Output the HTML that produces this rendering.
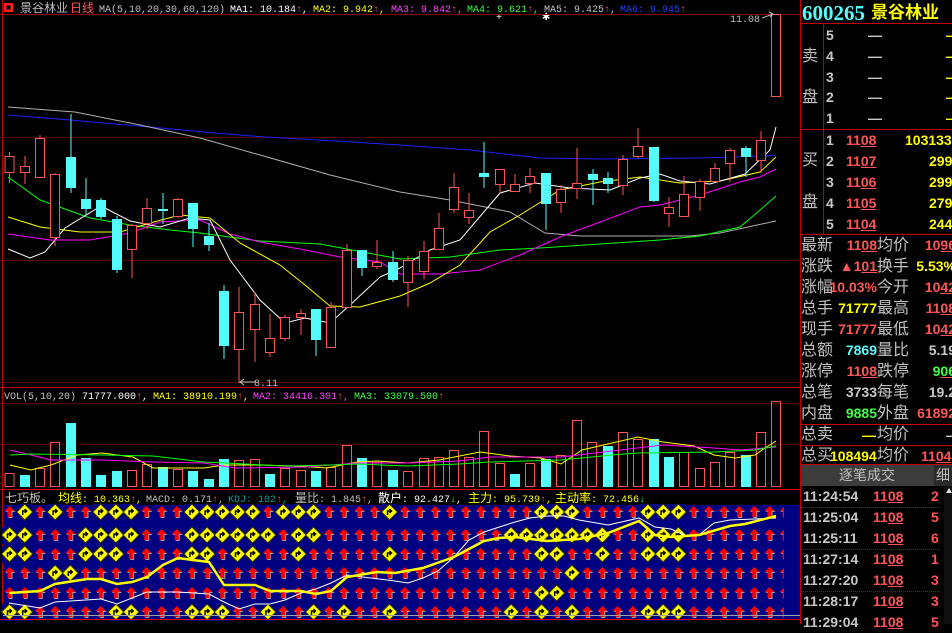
<!DOCTYPE html>
<html><head><meta charset="utf-8"><style>
*{margin:0;padding:0;box-sizing:border-box}
body{width:952px;height:624px;background:#000;overflow:hidden;position:relative;font-family:"Liberation Sans","Noto Sans CJK SC",sans-serif}
.a{position:absolute;white-space:nowrap}
.l{font-size:16px;color:#c0c0c0;line-height:20px}
.n{font-size:14px;font-weight:bold;line-height:20px}
.r{color:#ff5555}.y{color:#ffff00}.c{color:#54fcfc}.g{color:#40ff40}.w{color:#c8c8c8}
u{text-decoration:underline;text-decoration-color:#ff5555}
.hl{position:absolute;left:800px;width:152px;height:1px;background:#c00000}
.dl{position:absolute;left:800px;width:140px;height:0;border-top:1px dotted #c00000}
</style></head><body>
<svg width="952" height="624" style="position:absolute;left:0;top:0" font-family="Liberation Mono,'Noto Sans CJK SC',monospace">
<defs>
<pattern id="ar" patternUnits="userSpaceOnUse" x="1.9" y="-10" width="15.2" height="20">
<polygon transform="translate(8.6,11)" points="0,-6 5,-1 2,-1 2,5 -2,5 -2,-1 -5,-1" fill="#a0a0a0"/>
<polygon transform="translate(7.6,10)" points="0,-6 5,-1 2,-1 2,5 -2,5 -2,-1 -5,-1" fill="#ff0000"/>
</pattern>
<g id="d"><rect x="-7.5" y="-8" width="15" height="17" fill="#000080"/><polygon points="0,-8 8,0 0,8 -8,0" fill="#ffff00" stroke="#303000" stroke-width="1"/><path d="M-2,3V-1H2M0,-3L2,-1L0,1" stroke="#000" fill="none" stroke-width="1.5"/></g>
</defs>
<!-- header -->
<rect x="4" y="3" width="9" height="9" fill="#ff2020"/><rect x="6.5" y="5.5" width="4" height="4" fill="#000"/>
<text x="20" y="12" font-size="12" fill="#c0c0c0">景谷林业</text>
<text x="70" y="12" font-size="12" fill="#ff5555">日线</text>
<g font-size="10" y="12">
<text x="99" y="12" fill="#c0c0c0">MA(5,10,20,30,60,120)</text>
<text x="230" y="12" fill="#fff">MA1: 10.184<tspan fill="#ff5555">↑</tspan>,</text>
<text x="313" y="12" fill="#ffff00">MA2: 9.942<tspan fill="#ff5555">↑</tspan>,</text>
<text x="391" y="12" fill="#ff40ff">MA3: 9.842<tspan fill="#ff5555">↑</tspan>,</text>
<text x="467" y="12" fill="#40ff40">MA4: 9.621<tspan fill="#ff5555">↑</tspan>,</text>
<text x="544" y="12" fill="#c0c0c0">MA5: 9.425<tspan fill="#ff5555">↑</tspan>,</text>
<text x="620" y="12" fill="#2040ff">MA6: 9.945<tspan fill="#ff5555">↑</tspan></text>
</g>
<text x="496" y="20" font-size="10" fill="#fff">+</text><text x="542" y="20" font-size="10" fill="#fff">✱</text>
<!-- frame -->
<line x1="0" y1="14.5" x2="800" y2="14.5" stroke="#800000"/>
<line x1="2.5" y1="0" x2="2.5" y2="620" stroke="#c00000"/>
<line x1="800.5" y1="0" x2="800.5" y2="624" stroke="#c00000"/>
<line x1="0" y1="137.5" x2="800" y2="137.5" stroke="#500000"/>
<line x1="0" y1="260.5" x2="800" y2="260.5" stroke="#500000"/>
<line x1="0" y1="382.5" x2="800" y2="382.5" stroke="#500000"/>
<line x1="0" y1="387.5" x2="800" y2="387.5" stroke="#d00000"/>
<line x1="0" y1="444.5" x2="800" y2="444.5" stroke="#500000"/>
<line x1="0" y1="403.5" x2="800" y2="403.5" stroke="#500000"/>
<line x1="0" y1="489.5" x2="800" y2="489.5" stroke="#d00000"/>
<!-- MAs -->
<g fill="none" stroke-width="1">
<polyline stroke="#2020ff" points="8,115 70,120 150,127 215,133 265,137 335,141 400,145 470,150 540,158 600,159 700,158 765,156 776,155"/>
<polyline stroke="#b0b0b0" points="8,107 75,112 140,125 200,138 260,155 330,175 400,192 450,200 510,212 545,233 580,236 630,236 690,236 720,233 776,221"/>
<polyline stroke="#00ff00" points="8,177 40,200 90,218 130,225 170,230 200,233 260,241 320,244 400,259 450,257 500,250 540,248 600,244 660,240 700,236 740,227 760,210 776,196"/>
<polyline stroke="#ff00ff" points="8,234 50,240 90,240 130,233 160,222 200,220 230,234 260,242 300,249 340,257 380,262 400,274 440,274 480,270 520,255 560,237 600,222 640,207 660,205 700,195 740,182 760,177 776,169"/>
<polyline stroke="#ffff00" points="8,217 40,227 80,232 120,232 150,223 180,215 210,218 240,243 280,265 305,285 330,306 360,307 400,296 430,283 460,265 490,232 520,215 560,190 600,182 640,177 680,183 720,181 760,172 776,157"/>
<polyline stroke="#ffffff" points="8,249 30,258 45,252 65,228 101,206 130,221 160,227 190,218 210,220 230,260 260,300 285,323 305,318 330,323 350,305 380,277 400,268 430,250 460,240 500,193 535,183 570,188 610,190 640,178 660,174 680,181 710,184 745,174 770,150 776,127"/>
</g>
<!-- candles -->
<g id="candles" stroke-width="1">
<g stroke="#ff5555">
<line x1="9.5" y1="152" x2="9.5" y2="183"/><line x1="25" y1="156" x2="25" y2="184"/><line x1="40" y1="135" x2="40" y2="178"/><line x1="55" y1="173" x2="55" y2="246"/><line x1="132" y1="224" x2="132" y2="278"/><line x1="147" y1="198" x2="147" y2="229"/><line x1="178" y1="198" x2="178" y2="218"/><line x1="239" y1="287" x2="239" y2="383"/><line x1="255" y1="292" x2="255" y2="362"/><line x1="270" y1="314" x2="270" y2="357"/><line x1="285" y1="315" x2="285" y2="341"/><line x1="301" y1="309" x2="301" y2="335"/><line x1="331" y1="302" x2="331" y2="348"/><line x1="347" y1="244" x2="347" y2="308"/><line x1="377" y1="240" x2="377" y2="269"/><line x1="408" y1="256" x2="408" y2="307"/><line x1="424" y1="241" x2="424" y2="279"/><line x1="439" y1="213" x2="439" y2="250"/><line x1="454" y1="173" x2="454" y2="213"/><line x1="469" y1="193" x2="469" y2="224"/><line x1="500" y1="169" x2="500" y2="193"/><line x1="515" y1="174" x2="515" y2="192"/><line x1="530" y1="168" x2="530" y2="193"/><line x1="561" y1="185" x2="561" y2="213"/><line x1="577" y1="148" x2="577" y2="199"/><line x1="623" y1="155" x2="623" y2="195"/><line x1="638" y1="128" x2="638" y2="158"/><line x1="669" y1="197" x2="669" y2="227"/><line x1="684" y1="176" x2="684" y2="217"/><line x1="700" y1="179" x2="700" y2="211"/><line x1="715" y1="163" x2="715" y2="182"/><line x1="730" y1="148" x2="730" y2="182"/><line x1="761" y1="131" x2="761" y2="173"/>
</g>
<g fill="#000" stroke="#ff5555">
<rect x="5" y="156.5" width="9" height="16"/><rect x="20.5" y="166.5" width="9" height="6"/><rect x="35.5" y="138.5" width="9" height="39"/><rect x="50.5" y="174.5" width="9" height="63"/><rect x="127.5" y="225.5" width="9" height="24"/><rect x="142.5" y="208.5" width="9" height="15"/><rect x="173.5" y="199.5" width="9" height="17"/><rect x="234.5" y="312.5" width="9" height="37"/><rect x="250.5" y="304.5" width="9" height="25"/><rect x="265.5" y="338.5" width="9" height="14"/><rect x="280.5" y="317.5" width="9" height="21"/><rect x="296.5" y="313.5" width="9" height="4"/><rect x="326.5" y="307.5" width="9" height="40"/><rect x="342.5" y="250.5" width="9" height="57"/><rect x="372.5" y="262.5" width="9" height="4"/><rect x="403.5" y="260.5" width="9" height="22"/><rect x="419.5" y="251.5" width="9" height="20"/><rect x="434.5" y="228.5" width="9" height="21"/><rect x="449.5" y="187.5" width="9" height="22"/><rect x="464.5" y="210.5" width="9" height="7"/><rect x="495.5" y="169.5" width="9" height="15"/><rect x="510.5" y="184.5" width="9" height="7"/><rect x="525.5" y="176.5" width="9" height="7"/><rect x="556.5" y="189.5" width="9" height="13"/><rect x="572.5" y="183.5" width="9" height="5"/><rect x="618.5" y="159.5" width="9" height="26"/><rect x="633.5" y="146.5" width="9" height="10"/><rect x="664.5" y="207.5" width="9" height="6"/><rect x="679.5" y="194.5" width="9" height="22"/><rect x="695.5" y="181.5" width="9" height="16"/><rect x="710.5" y="168.5" width="9" height="13"/><rect x="725.5" y="150.5" width="9" height="13"/><rect x="756.5" y="140.5" width="9" height="20"/><rect x="771.5" y="14.5" width="9" height="82"/>
</g>
<g stroke="#54fcfc">
<line x1="71" y1="114" x2="71" y2="193"/><line x1="86" y1="178" x2="86" y2="215"/><line x1="101" y1="198" x2="101" y2="219"/><line x1="117" y1="216" x2="117" y2="273"/><line x1="163" y1="193" x2="163" y2="224"/><line x1="193" y1="203" x2="193" y2="247"/><line x1="209" y1="223" x2="209" y2="251"/><line x1="224" y1="285" x2="224" y2="359"/><line x1="316" y1="309" x2="316" y2="356"/><line x1="362" y1="250" x2="362" y2="276"/><line x1="393" y1="251" x2="393" y2="282"/><line x1="484" y1="142" x2="484" y2="188"/><line x1="546" y1="173" x2="546" y2="230"/><line x1="593" y1="169" x2="593" y2="205"/><line x1="608" y1="172" x2="608" y2="193"/><line x1="654" y1="147" x2="654" y2="202"/><line x1="746" y1="146" x2="746" y2="177"/>
</g>
<g fill="#54fcfc">
<rect x="66" y="157" width="10" height="31"/><rect x="81" y="199" width="10" height="10"/><rect x="96" y="200" width="10" height="17"/><rect x="112" y="219" width="10" height="51"/><rect x="158" y="209" width="10" height="2"/><rect x="188" y="203" width="10" height="26"/><rect x="204" y="236" width="10" height="9"/><rect x="219" y="291" width="10" height="55"/><rect x="311" y="309" width="10" height="31"/><rect x="357" y="250" width="10" height="18"/><rect x="388" y="262" width="10" height="18"/><rect x="479" y="173" width="10" height="4"/><rect x="541" y="173" width="10" height="31"/><rect x="588" y="174" width="10" height="6"/><rect x="603" y="178" width="10" height="6"/><rect x="649" y="147" width="10" height="54"/><rect x="741" y="148" width="10" height="9"/>
</g>
</g>
<text x="730" y="22" font-size="10" fill="#c0c0c0">11.08</text>
<path d="M762,18 L773,14 M769,12 L773,14 L770,17" stroke="#c0c0c0" fill="none"/>
<path d="M240,382 H256 M244,379 L240,382 L244,385" stroke="#c0c0c0" fill="none"/>
<text x="254" y="386" font-size="10" fill="#c0c0c0">8.11</text>
<!-- vol title -->
<g font-size="10">
<text x="4" y="399" fill="#c0c0c0">VOL(5,10,20)</text>
<text x="82" y="399" fill="#fff">71777.000<tspan fill="#ff5555">↑</tspan>,</text>
<text x="153" y="399" fill="#ffff00">MA1: 38910.199<tspan fill="#ff5555">↑</tspan>,</text>
<text x="253" y="399" fill="#ff40ff">MA2: 34416.301<tspan fill="#ff5555">↑</tspan>,</text>
<text x="354" y="399" fill="#40ff40">MA3: 33079.500<tspan fill="#ff5555">↑</tspan></text>
</g>
<!-- volume bars -->
<g fill="#54fcfc">
<rect x="20" y="475" width="10" height="12"/><rect x="66" y="423" width="10" height="64"/><rect x="81" y="458" width="10" height="29"/><rect x="96" y="475" width="10" height="12"/><rect x="112" y="471" width="10" height="16"/><rect x="158" y="467" width="10" height="20"/><rect x="188" y="471" width="10" height="16"/><rect x="204" y="479" width="10" height="8"/><rect x="219" y="459" width="10" height="28"/><rect x="265" y="474" width="10" height="13"/><rect x="311" y="471" width="10" height="16"/><rect x="357" y="458" width="10" height="29"/><rect x="388" y="470" width="10" height="17"/><rect x="510" y="474" width="10" height="13"/><rect x="541" y="459" width="10" height="28"/><rect x="603" y="446" width="10" height="41"/><rect x="649" y="439" width="10" height="48"/><rect x="664" y="457" width="10" height="30"/><rect x="741" y="455" width="10" height="32"/>
</g>
<g fill="none" stroke="#ff5555">
<rect x="5" y="473.5" width="9" height="13"/><rect x="35.5" y="468.5" width="9" height="18"/><rect x="50.5" y="442.5" width="9" height="44"/><rect x="127.5" y="470.5" width="9" height="16"/><rect x="142.5" y="464.5" width="9" height="22"/><rect x="173.5" y="469.5" width="9" height="17"/><rect x="234.5" y="460.5" width="9" height="26"/><rect x="250.5" y="459.5" width="9" height="27"/><rect x="280.5" y="468.5" width="9" height="18"/><rect x="296.5" y="470.5" width="9" height="16"/><rect x="326.5" y="467.5" width="9" height="19"/><rect x="342.5" y="445.5" width="9" height="41"/><rect x="372.5" y="462.5" width="9" height="24"/><rect x="403.5" y="471.5" width="9" height="15"/><rect x="419.5" y="458.5" width="9" height="28"/><rect x="434.5" y="457.5" width="9" height="29"/><rect x="449.5" y="450.5" width="9" height="36"/><rect x="464.5" y="457.5" width="9" height="29"/><rect x="479.5" y="431.5" width="9" height="55"/><rect x="495.5" y="463.5" width="9" height="23"/><rect x="525.5" y="463.5" width="9" height="23"/><rect x="556.5" y="455.5" width="9" height="31"/><rect x="572.5" y="420.5" width="9" height="66"/><rect x="587.5" y="442.5" width="9" height="44"/><rect x="618.5" y="432.5" width="9" height="54"/><rect x="633.5" y="439.5" width="9" height="47"/><rect x="679.5" y="452.5" width="9" height="34"/><rect x="695.5" y="468.5" width="9" height="18"/><rect x="710.5" y="462.5" width="9" height="24"/><rect x="725.5" y="452.5" width="9" height="34"/><rect x="756.5" y="432.5" width="9" height="54"/><rect x="771.5" y="401.5" width="9" height="85"/>
</g>
<g fill="none">
<polyline stroke="#ffff00" points="10,465 31,470 51,465 77,455 102,453 133,457 153,468 204,468 224,465 255,465 296,466 327,468 357,462 378,461 408,463 439,460 480,452 510,456 541,458 561,464 582,450 612,443 638,437 663,442 694,446 714,455 735,458 755,455 765,448 776,441"/>
<polyline stroke="#ff00ff" points="10,450 31,455 51,460 102,460 153,462 204,463 235,468 306,467 357,463 408,463 459,461 490,457 561,457 612,451 663,445 714,448 740,450 776,447"/>
<polyline stroke="#00ff00" points="10,455 31,454 102,455 153,456 204,462 286,466 332,465 357,464 408,466 459,464 490,462 561,460 612,455 638,453 714,452 755,450 776,446"/>
</g>
<!-- bottom panel -->
<rect x="3" y="491" width="797" height="14" fill="#000"/>
<g font-size="10">
<text x="5" y="502" fill="#c0c0c0" font-size="12">七巧板。</text>
<text x="58" y="502" fill="#ffff00"><tspan font-size="12">均线</tspan>: 10.363<tspan fill="#ff5555">↑</tspan>,</text>
<text x="146" y="502" fill="#c0c0c0">MACD: 0.171<tspan fill="#ff5555">↑</tspan>,</text>
<text x="228" y="502" fill="#00a0a0">KDJ: 102<tspan fill="#ff5555">↑</tspan>,</text>
<text x="295" y="502" fill="#c0c0c0"><tspan font-size="12">量比</tspan>: 1.845<tspan fill="#ff5555">↑</tspan>,</text>
<text x="378" y="502" fill="#fff"><tspan font-size="12">散户</tspan>: 92.427<tspan fill="#40ff40">↓</tspan>,</text>
<text x="468" y="502" fill="#ffff00"><tspan font-size="12">主力</tspan>: 95.739<tspan fill="#ff5555">↑</tspan>,</text>
<text x="555" y="502" fill="#ffff00"><tspan font-size="12">主动率</tspan>: 72.456<tspan fill="#40ff40">↓</tspan></text>
</g>
<rect x="3" y="505" width="797" height="114" fill="#000080"/>
<g transform="translate(0,512)"><rect x="2" y="-10" width="782" height="20" fill="url(#ar)"/></g>
<g transform="translate(0,535)"><rect x="2" y="-10" width="782" height="20" fill="url(#ar)"/></g>
<g transform="translate(0,554)"><rect x="2" y="-10" width="782" height="20" fill="url(#ar)"/></g>
<g transform="translate(0,573)"><rect x="2" y="-10" width="782" height="20" fill="url(#ar)"/></g>
<g transform="translate(0,593)"><rect x="2" y="-10" width="782" height="20" fill="url(#ar)"/></g>
<g transform="translate(0,612)"><rect x="2" y="-10" width="782" height="18" fill="url(#ar)"/></g>
<!-- diamonds row1 y512 cols 1,3,6,7,8,12,13,14,15,16,18,19,20,25,35,36,37,42,43,44 -->
<use href="#d" x="24.7" y="512"/><use href="#d" x="55.1" y="512"/><use href="#d" x="100.7" y="512"/><use href="#d" x="115.9" y="512"/><use href="#d" x="131.1" y="512"/><use href="#d" x="191.9" y="512"/><use href="#d" x="207.1" y="512"/><use href="#d" x="222.3" y="512"/><use href="#d" x="237.5" y="512"/><use href="#d" x="252.7" y="512"/><use href="#d" x="283.1" y="512"/><use href="#d" x="298.3" y="512"/><use href="#d" x="313.5" y="512"/><use href="#d" x="389.5" y="512"/><use href="#d" x="541.5" y="512"/><use href="#d" x="556.7" y="512"/><use href="#d" x="571.9" y="512"/><use href="#d" x="647.9" y="512"/><use href="#d" x="663.1" y="512"/><use href="#d" x="678.3" y="512"/>
<!-- row2 y535 cols 0,1,5,6,7,8,12,13,14,15,16,17,19,20,33,34,35,36,37,38,39,42,43,44 -->
<use href="#d" x="9.5" y="535"/><use href="#d" x="24.7" y="535"/><use href="#d" x="85.5" y="535"/><use href="#d" x="100.7" y="535"/><use href="#d" x="115.9" y="535"/><use href="#d" x="131.1" y="535"/><use href="#d" x="191.9" y="535"/><use href="#d" x="207.1" y="535"/><use href="#d" x="222.3" y="535"/><use href="#d" x="237.5" y="535"/><use href="#d" x="252.7" y="535"/><use href="#d" x="267.9" y="535"/><use href="#d" x="298.3" y="535"/><use href="#d" x="313.5" y="535"/><use href="#d" x="511.1" y="535"/><use href="#d" x="526.3" y="535"/><use href="#d" x="541.5" y="535"/><use href="#d" x="556.7" y="535"/><use href="#d" x="571.9" y="535"/><use href="#d" x="587.1" y="535"/><use href="#d" x="602.3" y="535"/><use href="#d" x="647.9" y="535"/><use href="#d" x="663.1" y="535"/><use href="#d" x="678.3" y="535"/>
<!-- row3 y554 cols 0,1,5,6,7,12,13,15,16,19,25,35,36,39,42,43,44 -->
<use href="#d" x="9.5" y="554"/><use href="#d" x="24.7" y="554"/><use href="#d" x="85.5" y="554"/><use href="#d" x="100.7" y="554"/><use href="#d" x="115.9" y="554"/><use href="#d" x="191.9" y="554"/><use href="#d" x="207.1" y="554"/><use href="#d" x="237.5" y="554"/><use href="#d" x="252.7" y="554"/><use href="#d" x="298.3" y="554"/><use href="#d" x="389.5" y="554"/><use href="#d" x="541.5" y="554"/><use href="#d" x="556.7" y="554"/><use href="#d" x="602.3" y="554"/><use href="#d" x="647.9" y="554"/><use href="#d" x="663.1" y="554"/><use href="#d" x="678.3" y="554"/>
<!-- row4 y573 cols 3,4,37 -->
<use href="#d" x="55.1" y="573"/><use href="#d" x="70.3" y="573"/><use href="#d" x="571.9" y="573"/>
<!-- row5 y593 cols 35,36 -->
<use href="#d" x="541.5" y="593"/><use href="#d" x="556.7" y="593"/>
<!-- row6 y612 cols 0,1,7,8,12,13,14,17,20,22,25,33,35,37,42,43,44 -->
<use href="#d" x="9.5" y="612"/><use href="#d" x="24.7" y="612"/><use href="#d" x="115.9" y="612"/><use href="#d" x="131.1" y="612"/><use href="#d" x="191.9" y="612"/><use href="#d" x="207.1" y="612"/><use href="#d" x="222.3" y="612"/><use href="#d" x="267.9" y="612"/><use href="#d" x="313.5" y="612"/><use href="#d" x="343.9" y="612"/><use href="#d" x="389.5" y="612"/><use href="#d" x="511.1" y="612"/><use href="#d" x="541.5" y="612"/><use href="#d" x="571.9" y="612"/><use href="#d" x="647.9" y="612"/><use href="#d" x="663.1" y="612"/><use href="#d" x="678.3" y="612"/>
<polyline fill="none" stroke="#ffffff" points="9,603 40,608 55,602 101,599 117,604 132,598 147,592 178,592 209,594 224,602 239,609 255,604 270,604 285,600 301,593 316,589 331,583 347,575 395,581 408,583 423,578 438,571 454,557 469,540 484,532 515,522 530,518 547,516 564,516 579,520 608,525 639,518 655,527 671,529 686,536 699,535 714,523 730,520 776,518"/>
<polyline fill="none" stroke="#ffff00" stroke-width="2.5" points="9,593 40,591 55,584 87,579 101,579 117,584 132,582 147,577 163,565 178,558 193,560 209,562 224,585 255,585 270,591 301,591 316,594 331,591 347,577 377,572 395,573 423,568 454,557 484,541 499,538 515,537 547,541 579,539 608,533 639,521 655,535 671,537 699,535 730,526 745,524 776,516"/>
<line x1="3" y1="615.5" x2="800" y2="615.5" stroke="#a0a0a0"/>
<line x1="0" y1="619.5" x2="800" y2="619.5" stroke="#d00000"/>
</svg>

<!-- right panel -->
<div class="a" style="left:802px;top:2px;font:bold 21px 'Liberation Serif',serif;color:#54fcfc;line-height:22px">600265</div>
<div class="a" style="left:871px;top:3px;font-size:17px;font-weight:bold;color:#ffff00;line-height:20px">景谷林业</div>
<div class="hl" style="top:23px"></div>
<div class="a" style="left:823px;top:23px;width:1px;height:211px;background:#c00000"></div>
<div class="a l" style="left:802px;top:47px">卖</div>
<div class="a l" style="left:802px;top:88px">盘</div>
<div class="a l" style="left:802px;top:151px">买</div>
<div class="a l" style="left:802px;top:193px">盘</div>
<div class="a n w" style="left:826px;top:25px">5</div><div class="a n w" style="left:826px;top:46px">4</div><div class="a n w" style="left:826px;top:67px">3</div><div class="a n w" style="left:826px;top:87px">2</div><div class="a n w" style="left:826px;top:108px">1</div>
<div class="a n w" style="left:868px;top:25px">—</div><div class="a n w" style="left:868px;top:46px">—</div><div class="a n w" style="left:868px;top:67px">—</div><div class="a n w" style="left:868px;top:87px">—</div><div class="a n w" style="left:868px;top:108px">—</div>
<div class="a n y" style="left:946px;top:25px">—</div><div class="a n y" style="left:946px;top:46px">—</div><div class="a n y" style="left:946px;top:67px">—</div><div class="a n y" style="left:946px;top:87px">—</div><div class="a n y" style="left:946px;top:108px">—</div>
<div class="hl" style="top:129px"></div>
<div class="a n w" style="left:826px;top:130px">1</div><div class="a n w" style="left:826px;top:151px">2</div><div class="a n w" style="left:826px;top:172px">3</div><div class="a n w" style="left:826px;top:193px">4</div><div class="a n w" style="left:826px;top:214px">5</div>
<div class="a n r" style="left:846px;top:130px">11<u>08</u></div><div class="a n r" style="left:846px;top:151px">11<u>07</u></div><div class="a n r" style="left:846px;top:172px">11<u>06</u></div><div class="a n r" style="left:846px;top:193px">11<u>05</u></div><div class="a n r" style="left:846px;top:214px">11<u>04</u></div>
<div class="a n y" style="left:905px;top:130px">103133</div><div class="a n y" style="left:929px;top:151px">299</div><div class="a n y" style="left:929px;top:172px">299</div><div class="a n y" style="left:929px;top:193px">279</div><div class="a n y" style="left:929px;top:214px">244</div>
<div class="hl" style="top:234px"></div>
<!-- stats -->
<div class="a l" style="left:801px;top:235px;line-height:21px">最新<br>涨跌<br>涨幅<br>总手<br>现手<br>总额<br>涨停<br>总笔<br>内盘</div>
<div class="a l" style="left:877px;top:235px;line-height:21px">均价<br>换手<br>今开<br>最高<br>最低<br>量比<br>跌停<br>每笔<br>外盘</div>
<div class="a n" style="left:800px;top:235px;width:77px;text-align:right;line-height:21px"><span class="r">11<u>08</u></span><br><span class="r">▲1<u>01</u></span><br><span class="r">10.03%</span><br><span class="y">71777</span><br><span class="r">71777</span><br><span class="c">7869</span><br><span class="r">11<u>08</u></span><br><span class="w">3733</span><br><span class="g">9885</span></div>
<div class="a n" style="left:880px;top:235px;width:76px;text-align:right;line-height:21px"><span class="r">10<u>96</u></span><br><span class="y">5.53%</span><br><span class="r">10<u>42</u></span><br><span class="r">11<u>08</u></span><br><span class="r">10<u>42</u></span><br><span class="w">5.19</span><br><span class="g">9<u>06</u></span><br><span class="w">19.2</span><br><span class="r">61892</span></div>
<div class="hl" style="top:424px"></div>
<div class="a l" style="left:801px;top:425px">总卖</div><div class="a n y" style="left:862px;top:425px">—</div><div class="a l" style="left:877px;top:425px">均价</div><div class="a n w" style="left:946px;top:425px">—</div>
<div class="hl" style="top:445px"></div>
<div class="a l" style="left:801px;top:446px">总买</div><div class="a n y" style="left:830px;top:446px">108494</div><div class="a l" style="left:877px;top:446px">均价</div><div class="a n r" style="left:921px;top:446px">11<u>04</u></div>
<div class="hl" style="top:464px"></div>
<div class="a" style="left:801px;top:465px;width:132px;height:21px;background:#3c3c3c;color:#c0c0c0;font-size:14px;line-height:21px;text-align:center">逐笔成交</div>
<div class="a" style="left:933px;top:465px;width:19px;height:21px;background:#2a2a2a;border-left:1px solid #c00000;color:#c0c0c0;font-size:14px;line-height:21px;padding-left:2px">细</div>
<div class="a" style="left:944px;top:486px;width:8px;height:138px;background:#101010"></div>
<div class="a" style="left:946px;top:488px;width:0;height:0;border-left:3px solid transparent;border-right:3px solid transparent;border-bottom:5px solid #e0e0e0"></div>
<div class="a n w" style="left:803px;top:486px;line-height:21px">11:24:54<br>11:25:04<br>11:25:11<br>11:27:14<br>11:27:20<br>11:28:17<br>11:29:04</div>
<div class="a n r" style="left:873px;top:486px;line-height:21px">11<u>08</u><br>11<u>08</u><br>11<u>08</u><br>11<u>08</u><br>11<u>08</u><br>11<u>08</u><br>11<u>08</u></div>
<div class="a n r" style="left:931px;top:486px;line-height:21px">2<br>5<br>6<br>1<br>3<br>3<br>5</div>
<div class="dl" style="top:507px"></div><div class="dl" style="top:549px"></div><div class="dl" style="top:591px"></div>
</body></html>
